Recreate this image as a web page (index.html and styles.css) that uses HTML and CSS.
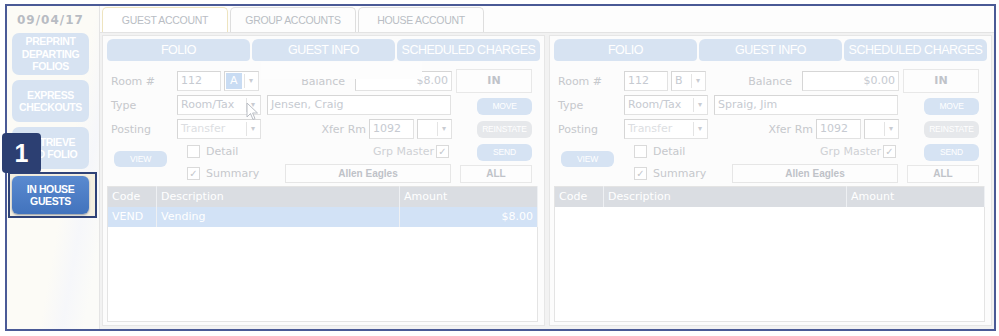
FILE: index.html
```html
<!DOCTYPE html>
<html lang="en">
<head>
    <meta charset="UTF-8">
    <title>In House Guests</title>
    <link rel="stylesheet" href="styles.css">
</head>
<body>
    <div class="frame">
        <div class="sidebar">
            <div class="date">09/04/17</div>
            <div class="side_btn">PREPRINT<br>DEPARTING<br>FOLIOS</div>
            <div class="side_btn">EXPRESS<br>CHECKOUTS</div>
            <div class="side_btn">RETRIEVE<br>OLD FOLIO</div>
            <div class="highlight">
                <div class="side_btn active">IN HOUSE<br>GUESTS</div>
            </div>
            <div class="badge">1</div>
        </div>

        <div class="main">
            <div class="tabs">
                <div class="tab current">GUEST ACCOUNT</div>
                <div class="tab">GROUP ACCOUNTS</div>
                <div class="tab">HOUSE ACCOUNT</div>
            </div>

            <div class="panels">
                <!-- left folio -->
                <div class="panel">
                    <div class="panel_tabs">
                        <div class="ptab">FOLIO</div>
                        <div class="ptab">GUEST INFO</div>
                        <div class="ptab">SCHEDULED CHARGES</div>
                    </div>
                    <div class="form">
                        <div class="fields">
                            <div class="row">
                                <span class="lbl">Room #</span>
                                <span class="box w44">112</span>
                                <span class="sel w35 ml3"><span class="pick">A</span><span class="arrow">&#9662;</span></span>
                                <span class="rlbl">Balance</span>
                                <span class="box w97 right">$8.00</span>
                            </div>
                            <div class="row">
                                <span class="lbl">Type</span>
                                <span class="sel w84">Room/Tax<span class="arrow">&#9662;</span></span>
                                <span class="box w184 ml6">Jensen, Craig</span>
                            </div>
                            <div class="row">
                                <span class="lbl">Posting</span>
                                <span class="sel w84 dim">Transfer<span class="arrow">&#9662;</span></span>
                                <span class="rlbl short">Xfer Rm</span>
                                <span class="box w45">1092</span>
                                <span class="sel w35 ml3"><span class="arrow">&#9662;</span></span>
                            </div>
                            <div class="lower">
                                <div class="viewcol"><span class="btn view">VIEW</span></div>
                                <div class="checks">
                                    <div class="crow">
                                        <span class="chk"></span><span class="ctext">Detail</span>
                                        <span class="grp">Grp Master <span class="chk on small">&#10003;</span></span>
                                    </div>
                                    <div class="crow">
                                        <span class="chk on">&#10003;</span><span class="ctext">Summary</span>
                                        <span class="name_box">Allen Eagles</span>
                                    </div>
                                </div>
                            </div>
                        </div>
                        <div class="side">
                            <div class="in_box">IN</div>
                            <span class="btn act">MOVE</span>
                            <span class="btn act gray">REINSTATE</span>
                            <span class="btn act">SEND</span>
                            <div class="all_box">ALL</div>
                        </div>
                    </div>
                    <table class="grid">
                        <tr><th class="c1">Code</th><th class="c2">Description</th><th class="c3">Amount</th></tr>
                        <tr class="sel_row"><td>VEND</td><td>Vending</td><td class="right">$8.00</td></tr>
                        <tr class="filler"><td colspan="3"></td></tr>
                    </table>
                    <div class="tip"></div>
                    <svg class="cursor" width="13" height="19" viewBox="0 0 13 19">
                        <path d="M1 1 L1 15 L4.5 11.5 L7 17.5 L9 16.6 L6.6 11 L11.5 11 Z" fill="#fff" stroke="#b9bdc4" stroke-width="1"/>
                    </svg>
                </div>

                <!-- right folio -->
                <div class="panel">
                    <div class="panel_tabs">
                        <div class="ptab">FOLIO</div>
                        <div class="ptab">GUEST INFO</div>
                        <div class="ptab">SCHEDULED CHARGES</div>
                    </div>
                    <div class="form">
                        <div class="fields">
                            <div class="row">
                                <span class="lbl">Room #</span>
                                <span class="box w44">112</span>
                                <span class="sel w35 ml3">B<span class="arrow">&#9662;</span></span>
                                <span class="rlbl">Balance</span>
                                <span class="box w97 right">$0.00</span>
                            </div>
                            <div class="row">
                                <span class="lbl">Type</span>
                                <span class="sel w84">Room/Tax<span class="arrow">&#9662;</span></span>
                                <span class="box w184 ml6">Spraig, Jim</span>
                            </div>
                            <div class="row">
                                <span class="lbl">Posting</span>
                                <span class="sel w84 dim">Transfer<span class="arrow">&#9662;</span></span>
                                <span class="rlbl short">Xfer Rm</span>
                                <span class="box w45">1092</span>
                                <span class="sel w35 ml3"><span class="arrow">&#9662;</span></span>
                            </div>
                            <div class="lower">
                                <div class="viewcol"><span class="btn view">VIEW</span></div>
                                <div class="checks">
                                    <div class="crow">
                                        <span class="chk"></span><span class="ctext">Detail</span>
                                        <span class="grp">Grp Master <span class="chk on small">&#10003;</span></span>
                                    </div>
                                    <div class="crow">
                                        <span class="chk on">&#10003;</span><span class="ctext">Summary</span>
                                        <span class="name_box">Allen Eagles</span>
                                    </div>
                                </div>
                            </div>
                        </div>
                        <div class="side">
                            <div class="in_box">IN</div>
                            <span class="btn act">MOVE</span>
                            <span class="btn act gray">REINSTATE</span>
                            <span class="btn act">SEND</span>
                            <div class="all_box">ALL</div>
                        </div>
                    </div>
                    <table class="grid">
                        <tr><th class="c1">Code</th><th class="c2">Description</th><th class="c3">Amount</th></tr>
                        <tr class="filler"><td colspan="3"></td></tr>
                    </table>
                </div>
            </div>
        </div>
    </div>
</body>
</html>
```

FILE: styles.css
```css
* {
    box-sizing: border-box;
    margin: 0;
    padding: 0;
}
body {
    background: #fff;
    font-family: "DejaVu Sans", sans-serif;
    font-size: 11px;
    color: #c4c7cc;
}
.frame {
    margin: 4px 0 0 5px;
    width: 991px;
    height: 327px;
    border: 2px solid #4a5a96;
    display: flex;
    background: #fcfbf8;
}

/* left column */
.sidebar {
    width: 93px;
    padding-left: 5px;
    position: relative;
    background: linear-gradient(100deg, #fcfbf6 60%, #f6f7fa 75%, #fbfbf8 90%);
}
.date {
    height: 27px;
    line-height: 28px;
    padding-left: 5px;
    font-weight: bold;
    font-size: 12px;
    letter-spacing: 1px;
    color: #b8bcc3;
}
.side_btn {
    width: 77px;
    height: 42px;
    margin-bottom: 5px;
    border-radius: 7px;
    background: #d7e3f2;
    color: #fff;
    font-family: "Liberation Sans", Arial, sans-serif;
    font-weight: bold;
    font-size: 10.5px;
    letter-spacing: -0.4px;
    line-height: 12.5px;
    text-align: center;
    display: flex;
    align-items: center;
    justify-content: center;
}
.highlight {
    margin: -2px 0 0 -4px;
    width: 89px;
    height: 46px;
    border: 2px solid #2f4277;
    padding: 2px;
    background: #f4efe0;
}
.side_btn.active {
    height: 38px;
    margin: 0;
    background: linear-gradient(#5a8ad0, #4273bd);
    border-radius: 6px;
    box-shadow: 0 1px 2px rgba(40, 60, 110, 0.5);
}
.badge {
    position: absolute;
    left: -5px;
    top: 127px;
    width: 39px;
    height: 40px;
    border-radius: 4px;
    background: #2c3f72;
    color: #fff;
    font-family: "Liberation Sans", Arial, sans-serif;
    font-weight: bold;
    font-size: 25px;
    line-height: 40px;
    text-align: center;
}

/* main area */
.main {
    flex: 1;
    border-left: 1px solid #e4e4e4;
    display: flex;
    flex-direction: column;
}
.tabs {
    height: 27px;
    display: flex;
    gap: 2px;
    padding: 1px 0 0 2px;
    border-bottom: 1px solid #e3e3e3;
    background: #fdfdfd;
}
.tab {
    width: 126px;
    border: 1px solid #dedede;
    border-bottom: none;
    border-radius: 5px 5px 0 0;
    background: #fdfdfd;
    font-family: "Liberation Sans", Arial, sans-serif;
    font-size: 10.5px;
    letter-spacing: -0.3px;
    color: #b9bdc4;
    text-align: center;
    line-height: 25px;
}
.tab.current {
    border-color: #eee4bf;
    background: #fff;
}
.panels {
    flex: 1;
    display: flex;
    gap: 4px;
    padding: 2px 2px 3px 2px;
    background: #f2f2f2;
}
.panel {
    width: 443px;
    position: relative;
    border: 1px solid #e6e6e6;
    background: #fcfcfc;
    padding: 3px 4px 3px 4px;
    display: flex;
    flex-direction: column;
}
.panel_tabs {
    display: flex;
    gap: 2px;
}
.ptab {
    width: 143px;
    height: 22px;
    border-radius: 6px 6px 4px 4px;
    background: #d7e3f2;
    color: #fff;
    font-family: "Liberation Sans", Arial, sans-serif;
    font-size: 12.5px;
    letter-spacing: -0.5px;
    line-height: 22px;
    text-align: center;
}

/* form */
.form {
    display: flex;
    padding: 8px 0 0 4px;
    height: 124px;
}
.fields {
    width: 341px;
}
.row {
    height: 24px;
    display: flex;
    align-items: center;
}
.lbl {
    width: 66px;
    color: #c6c8cc;
}
.rlbl {
    flex: 1;
    text-align: right;
    padding-right: 10px;
    color: #c6c8cc;
}
.rlbl.short {
    padding-right: 3px;
}
.box, .sel {
    height: 20px;
    line-height: 18px;
    border: 1px solid #e2e2e2;
    border-top-color: #d6d6d6;
    border-left-color: #d6d6d6;
    background: #fff;
    padding: 0 3px;
    color: #c6cad1;
    white-space: nowrap;
    overflow: hidden;
}
.sel {
    position: relative;
    padding-right: 15px;
}
.sel.dim {
    color: #dcdee2;
}
.arrow {
    position: absolute;
    right: 1px;
    top: 2px;
    width: 13px;
    height: 14px;
    border-left: 1px solid #e4e4e4;
    font-size: 8px;
    line-height: 14px;
    text-align: center;
    color: #c9ccd2;
}
.pick {
    display: inline-block;
    background: #c9dcf3;
    color: #fff;
    padding: 0 4px;
    margin-left: -2px;
    line-height: 16px;
}
.right {
    text-align: right;
}
.w44 { width: 44px; }
.w45 { width: 45px; }
.w35 { width: 35px; }
.w84 { width: 84px; }
.w97 { width: 97px; }
.w184 { width: 184px; }
.ml3 { margin-left: 3px; }
.ml6 { margin-left: 6px; }

.lower {
    display: flex;
}
.viewcol {
    width: 66px;
    padding: 10px 0 0 3px;
}
.checks {
    flex: 1;
}
.crow {
    height: 21px;
    display: flex;
    align-items: center;
    padding-left: 10px;
}
.crow + .crow {
    height: 22px;
}
.chk {
    width: 13px;
    height: 13px;
    border: 1px solid #dadada;
    background: #fff;
    font-size: 10px;
    line-height: 11px;
    text-align: center;
    color: #c4c7cc;
}
.chk.small {
    display: inline-block;
    margin-left: 2px;
}
.ctext {
    margin-left: 6px;
    color: #c6c8cc;
}
.grp {
    margin-left: auto;
    margin-right: 3px;
    display: flex;
    align-items: center;
    color: #cfd1d5;
}
.name_box {
    margin-left: auto;
    width: 166px;
    height: 19px;
    margin-right: 1px;
    border: 1px solid #e6e6e6;
    background: #fdfdfd;
    font-family: "Liberation Sans", Arial, sans-serif;
    font-weight: bold;
    font-size: 10px;
    line-height: 17px;
    text-align: center;
    color: #bfc2c8;
}
.side {
    width: 76px;
    margin-left: 4px;
    display: flex;
    flex-direction: column;
    align-items: flex-end;
}
.in_box {
    width: 76px;
    height: 24px;
    border: 1px solid #e8e8e8;
    background: #fdfdfd;
    font-weight: bold;
    font-size: 11px;
    line-height: 22px;
    text-align: center;
    color: #c0c3c9;
}
.btn {
    display: block;
    height: 17px;
    border-radius: 6px;
    background: #d6e3f3;
    color: #fff;
    font-family: "Liberation Sans", Arial, sans-serif;
    font-size: 8.5px;
    letter-spacing: -0.2px;
    line-height: 17px;
    text-align: center;
}
.btn.view {
    width: 53px;
    height: 16px;
    line-height: 16px;
}
.btn.act {
    width: 55px;
    margin-top: 5px;
}
.btn.gray {
    margin-top: 6px;
    background: #e6e8eb;
}
.btn.act + .btn.act.gray + .btn.act {
    margin-top: 6px;
}
.all_box {
    width: 72px;
    height: 18px;
    margin-top: 4px;
    border: 1px solid #e8e8e8;
    background: #fdfdfd;
    font-family: "Liberation Sans", Arial, sans-serif;
    font-weight: bold;
    font-size: 10px;
    line-height: 16px;
    text-align: center;
    color: #c0c3c9;
}

/* charges grid */
.grid {
    margin-top: 1px;
    width: 431px;
    flex: 1;
    border-collapse: collapse;
    border: 1px solid #e4e4e4;
    background: #fff;
    color: #fff;
}
.grid th, .grid td {
    height: 20px;
    padding: 0 4px;
    font-weight: normal;
    text-align: left;
    border-right: 1px solid #eef0f3;
}
.grid th {
    background: #dadde2;
}
.grid .c1 { width: 49px; }
.grid .c2 { width: 243px; }
.grid .sel_row td {
    background: #d2e2f6;
}
.grid .sel_row td.right {
    text-align: right;
}
.grid .filler td {
    height: auto;
    border: none;
}

/* overlays */
.tip {
    position: absolute;
    left: 158px;
    top: 26px;
    width: 161px;
    height: 17px;
    background: #fdfdfd;
}
.cursor {
    position: absolute;
    left: 143px;
    top: 66px;
}
```
